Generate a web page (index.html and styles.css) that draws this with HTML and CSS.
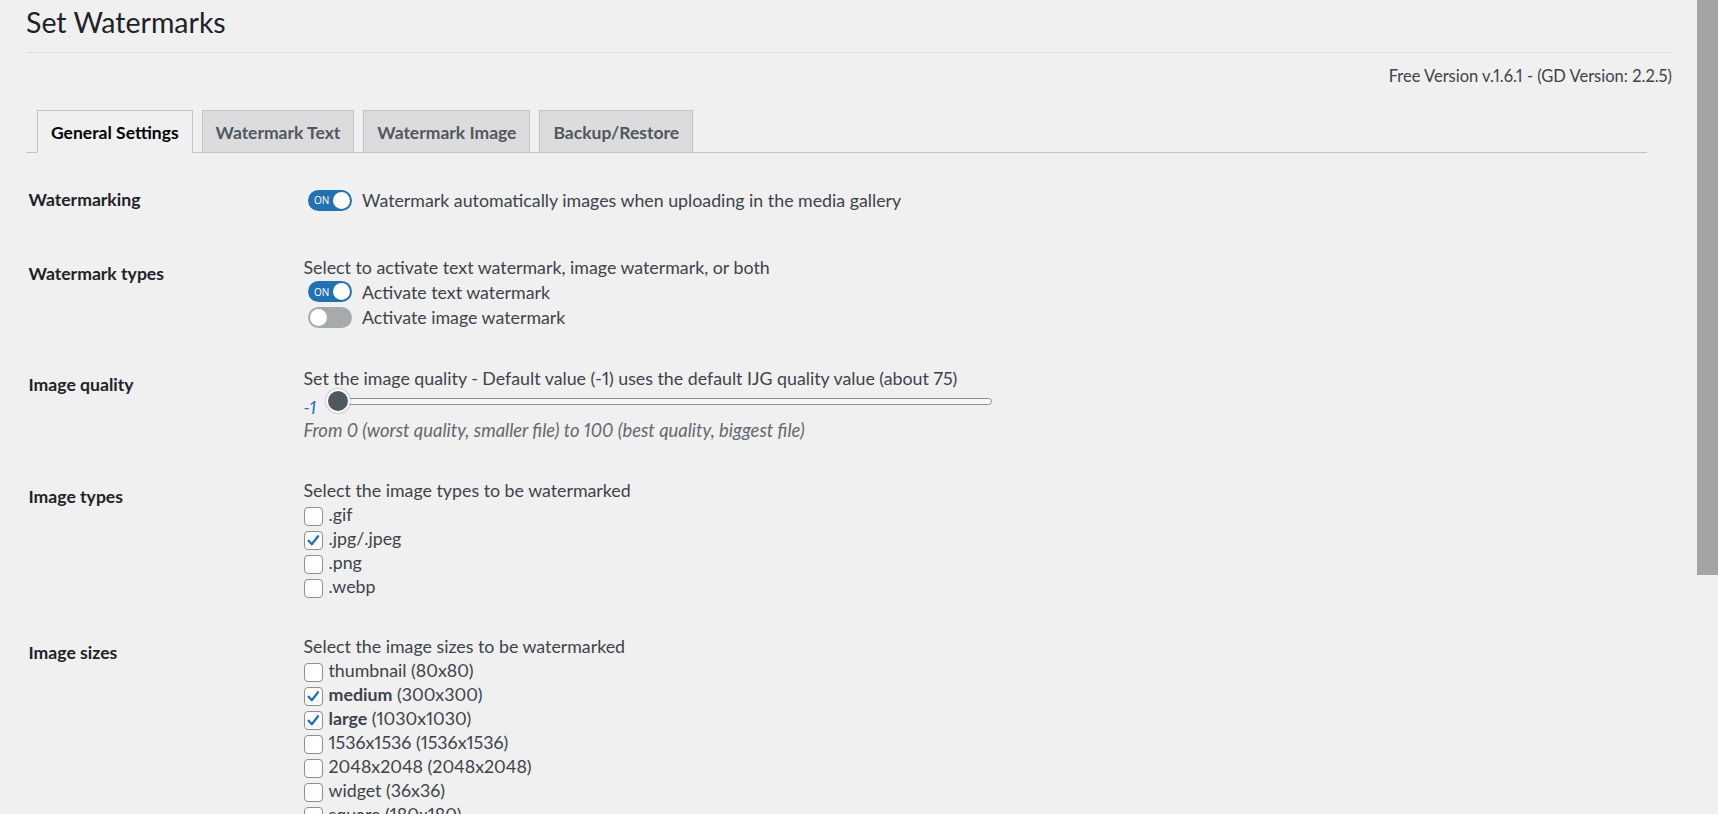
FILE: index.html
```html
<!DOCTYPE html>
<html lang="en">
<head>
<meta charset="utf-8">
<title>Set Watermarks</title>
<link rel="stylesheet" href="styles.css">
</head>
<body>
<div class="wrap">
  <h1 class="title">Set Watermarks</h1>
  <div class="version">Free Version v.1.6.1 - (GD Version: 2.2.5)</div>
  <nav class="tabs">
    <a class="tab active">General Settings</a>
    <a class="tab">Watermark Text</a>
    <a class="tab">Watermark Image</a>
    <a class="tab">Backup/Restore</a>
  </nav>
  <div class="form">
    <div class="row">
      <div class="label">Watermarking</div>
      <div class="field field-single">
        <label class="toggle-line"><span class="toggle on"><span class="toggle-on">ON</span><span class="knob"></span></span><span>Watermark automatically images when uploading in the media gallery</span></label>
      </div>
    </div>
    <div class="row">
      <div class="label">Watermark types</div>
      <div class="field">
        <div class="line">Select to activate text watermark, image watermark, or both</div>
        <label class="toggle-line tl"><span class="toggle on"><span class="toggle-on">ON</span><span class="knob"></span></span><span>Activate text watermark</span></label>
        <label class="toggle-line tl"><span class="toggle off"><span class="knob"></span></span><span>Activate image watermark</span></label>
      </div>
    </div>
    <div class="row">
      <div class="label">Image quality</div>
      <div class="field">
        <div class="line">Set the image quality - Default value (-1) uses the default IJG quality value (about 75)</div>
        <div class="slider-line">
          <span class="slider-value">-1</span>
          <div class="slider">
            <div class="track"></div>
            <div class="thumb"></div>
          </div>
        </div>
        <div class="line hint">From 0 (worst quality, smaller file) to 100 (best quality, biggest file)</div>
      </div>
    </div>
    <div class="row">
      <div class="label">Image types</div>
      <div class="field">
        <div class="line">Select the image types to be watermarked</div>
        <label class="check-line"><span class="cb"></span>.gif</label>
        <label class="check-line"><span class="cb checked"><svg viewBox="0 0 19 19"><path d="M4 9.8 L7.6 13.6 L14.6 4.8"/></svg></span>.jpg/.jpeg</label>
        <label class="check-line"><span class="cb"></span>.png</label>
        <label class="check-line"><span class="cb"></span>.webp</label>
      </div>
    </div>
    <div class="row">
      <div class="label">Image sizes</div>
      <div class="field">
        <div class="line">Select the image sizes to be watermarked</div>
        <label class="check-line"><span class="cb"></span>thumbnail (80x80)</label>
        <label class="check-line"><span class="cb checked"><svg viewBox="0 0 19 19"><path d="M4 9.8 L7.6 13.6 L14.6 4.8"/></svg></span><b>medium</b>&nbsp;(300x300)</label>
        <label class="check-line"><span class="cb checked"><svg viewBox="0 0 19 19"><path d="M4 9.8 L7.6 13.6 L14.6 4.8"/></svg></span><b>large</b>&nbsp;(1030x1030)</label>
        <label class="check-line"><span class="cb"></span>1536x1536 (1536x1536)</label>
        <label class="check-line"><span class="cb"></span>2048x2048 (2048x2048)</label>
        <label class="check-line"><span class="cb"></span>widget (36x36)</label>
        <label class="check-line"><span class="cb"></span>square (180x180)</label>
      </div>
    </div>
  </div>
</div>
<div class="scrollbar"></div>
</body>
</html>
```
FILE: styles.css
```css
html, body {
  margin: 0;
  padding: 0;
  background: #f0f0f1;
  overflow: hidden;
  height: 814px;
}
body {
  font-family: Lato, "Open Sans", sans-serif;
  color: #3c434a;
  font-size: 17.8px;
  font-variant-numeric: proportional-nums;
}
.wrap {
  padding: 4px 46px 0 26px;
}
.title {
  margin: 0;
  font-size: 28.5px;
  font-weight: 400;
  line-height: 36px;
  color: #1d2327;
  padding-bottom: 12px;
  border-bottom: 1px solid #dcdcde;
}
.version {
  margin-top: 11px;
  text-align: right;
  font-size: 16.5px;
  line-height: 24px;
}
.tabs {
  margin: 22px 25px 0 0;
  padding-left: 11px;
  display: flex;
  gap: 9px;
  border-bottom: 1px solid #c3c4c7;
  height: 42px;
}
.tab {
  display: flex;
  align-items: center;
  box-sizing: border-box;
  height: 43px;
  padding: 1px 13px 0;
  border: 1px solid #c3c4c7;
  background: #dcdcde;
  color: #50575e;
  font-weight: 700;
  font-size: 17.5px;
}
.tab.active {
  background: #f0f0f1;
  color: #000;
  border-bottom-color: #f0f0f1;
}
.form {
  margin-top: 10px;
  padding-left: 2.5px;
}
.row {
  display: grid;
  grid-template-columns: 275px 1fr;
  padding: 18px 0;
}
.label {
  padding-top: 6.5px;
  line-height: 24px;
  font-weight: 700;
  font-size: 17.6px;
  color: #1d2327;
}
.field {
  line-height: 24px;
}
.field-single {
  height: 38px;
  display: flex;
  align-items: center;
}
.toggle-line {
  display: flex;
  align-items: center;
  gap: 10px;
}
.tl {
  height: 25.5px;
}
.toggle {
  position: relative;
  display: inline-flex;
  align-items: center;
  box-sizing: border-box;
  width: 44px;
  height: 21px;
  border-radius: 11px;
  margin-left: 4.5px;
}
.toggle.on {
  background: #2271b1;
}
.toggle.off {
  background: #a7aaad;
}
.toggle-on {
  color: #fff;
  font-family: "Open Sans", sans-serif;
  font-size: 10px;
  line-height: 1;
  margin-left: 6px;
}
.knob {
  position: absolute;
  top: 2px;
  width: 17px;
  height: 17px;
  border-radius: 50%;
  background: #fff;
}
.on .knob {
  right: 2px;
}
.off .knob {
  left: 2px;
}
.slider-line {
  display: flex;
  align-items: center;
  height: 22px;
}
.slider-value {
  color: #2271b1;
  font-style: italic;
  width: 22px;
  margin-top: 14px;
  line-height: 1;
}
.slider {
  position: relative;
  width: 666px;
  height: 24px;
  display: flex;
  align-items: center;
}
.track {
  flex: 1;
  margin-left: 12px;
  height: 7px;
  box-sizing: border-box;
  border: 1px solid #8c8f94;
  border-radius: 4px;
  background: #f6f7f7;
}
.thumb {
  position: absolute;
  left: 0;
  top: 0;
  width: 24px;
  height: 24px;
  box-sizing: border-box;
  border-radius: 50%;
  background: #50575e;
  border: 2px solid #fff;
  box-shadow: 0 0 2px rgba(0, 0, 0, 0.45);
}
.hint {
  margin-top: 6px;
  font-style: italic;
  font-size: 18.4px;
  color: #646970;
}
.check-line {
  display: flex;
  align-items: center;
  height: 24px;
}
.check-line b {
  font-weight: 700;
  color: #3c434a;
}
.cb {
  box-sizing: border-box;
  width: 19px;
  height: 19px;
  border: 1px solid #8c8f94;
  border-radius: 4px;
  background: #fff;
  margin: 4px 6px 0 0;
  flex: none;
  display: flex;
  align-items: center;
  justify-content: center;
}
.cb svg {
  width: 17px;
  height: 17px;
}
.cb path {
  fill: none;
  stroke: #2271b1;
  stroke-width: 2.6;
  stroke-linecap: round;
  stroke-linejoin: round;
}
.scrollbar {
  position: fixed;
  top: 0;
  right: 0;
  width: 21px;
  height: 575px;
  background: #a3a3a3;
}
```
